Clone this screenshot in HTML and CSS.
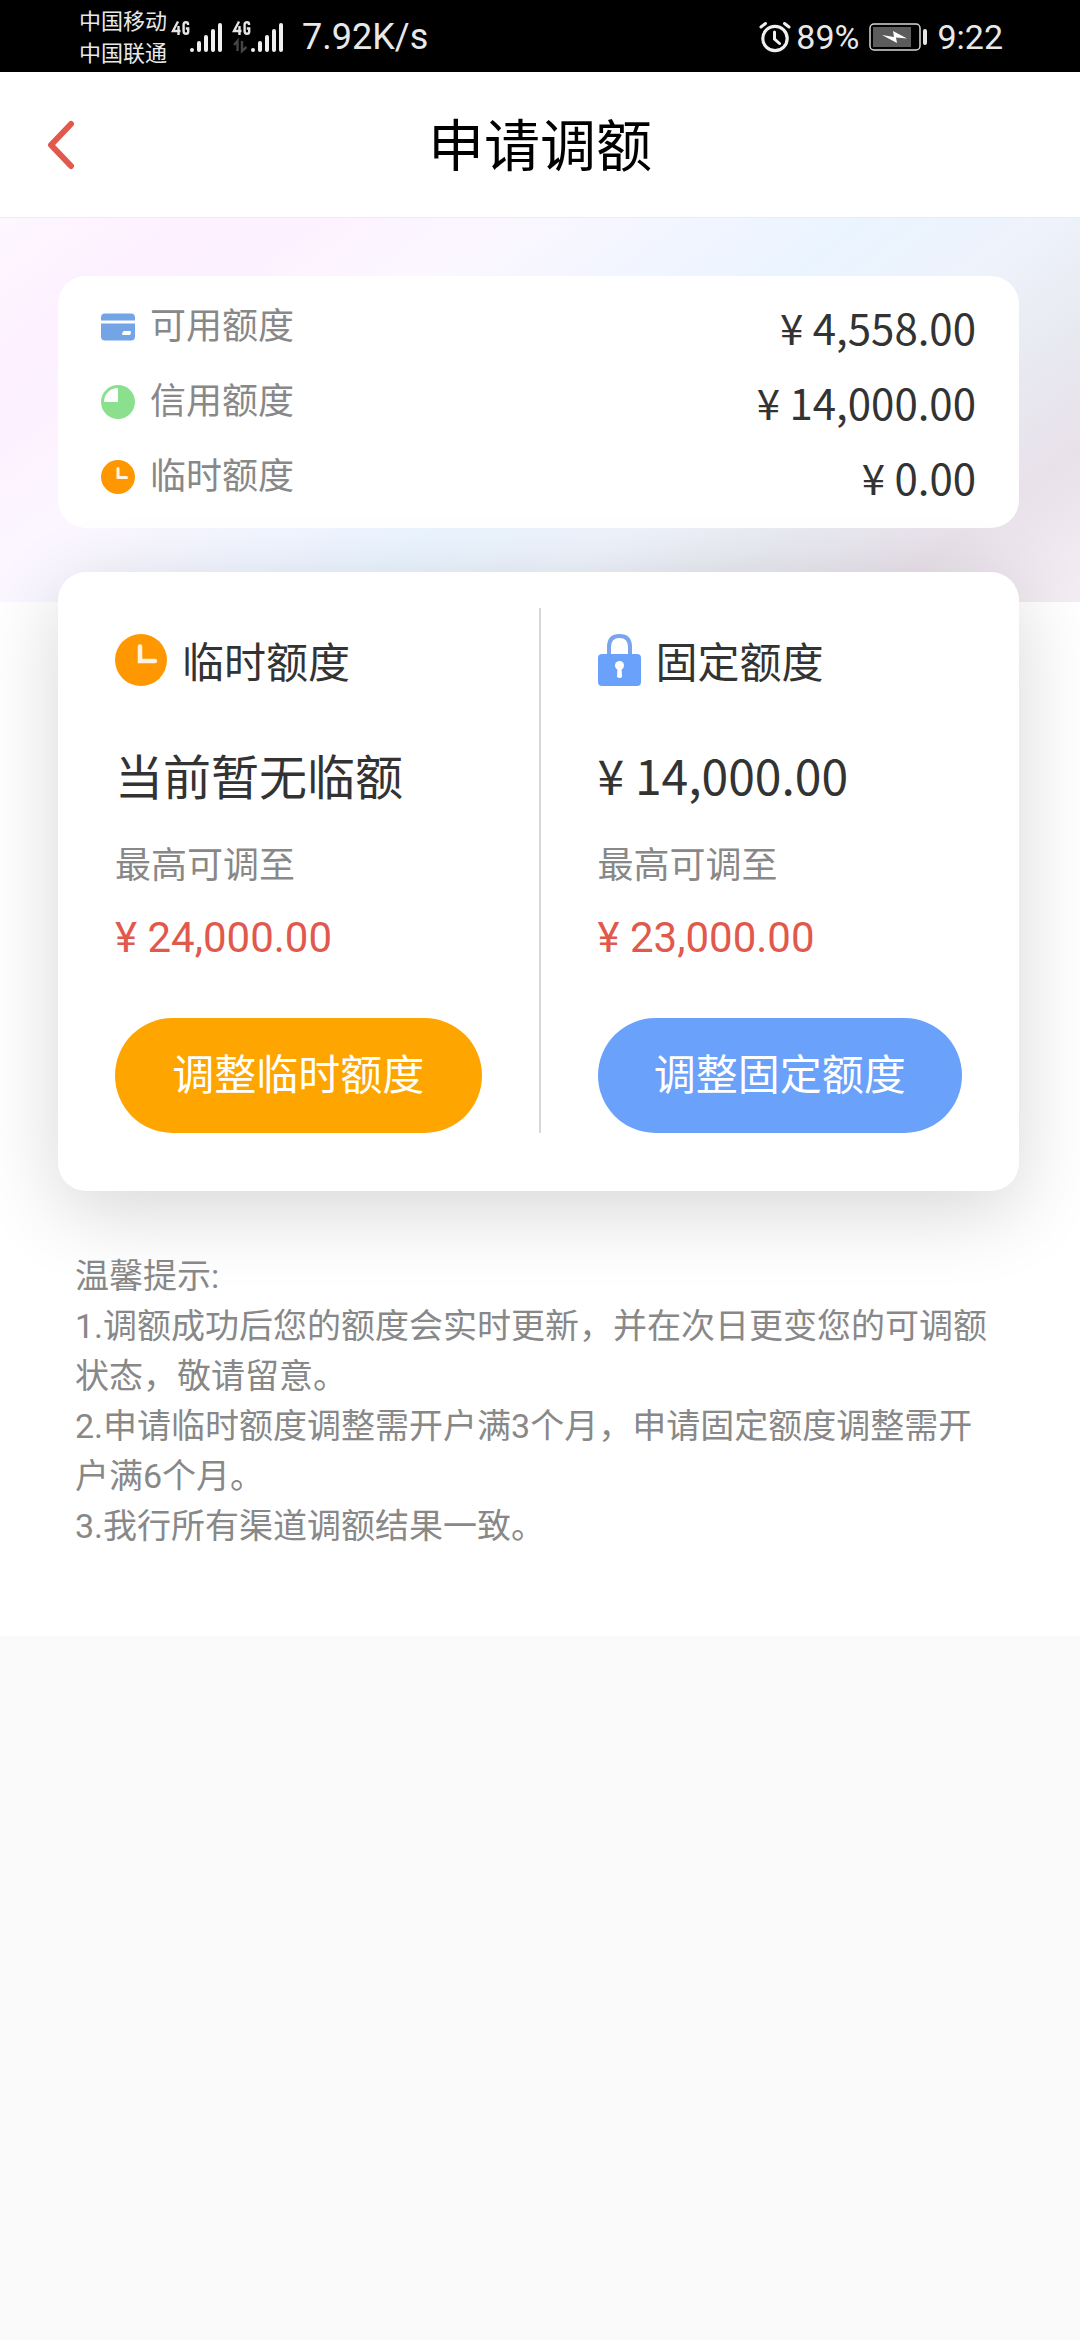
FILE: index.html
```html
<!DOCTYPE html>
<html lang="zh-CN">
<head>
  <meta charset="utf-8">
  <meta name="viewport" content="width=device-width, initial-scale=1">
  <title>申请调额</title>
  <link rel="stylesheet" href="styles.css">
</head>
<body>
  <div class="status">
    <div class="status-side">
      <div class="carriers"><span>中国移动</span><span>中国联通</span></div>
      <svg class="signal" width="52" height="36" viewBox="0 0 52 36" aria-hidden="true">
        <g fill="none" stroke="#e6e6e6" stroke-width="2.4"><path d="M7 2.500L2 12H9.500M7.500 7V16"/><path d="M17 6V5Q17 3.200 15 3.200Q12.600 3.200 12.600 5.500V12Q12.600 14.800 15 14.800Q17.200 14.800 17.200 12.500V9.500H14.800"/></g>
        <g stroke="#f0f0f0" stroke-width="4" stroke-linecap="round"><path d="M21 31V31M28 24V31M35 18V31M42 12V31M49 6V31"/></g>
      </svg>
      <svg class="signal signal-two" width="52" height="36" viewBox="0 0 52 36" aria-hidden="true">
        <g fill="none" stroke="#e6e6e6" stroke-width="2.4"><path d="M7 2.500L2 12H9.500M7.500 7V16"/><path d="M17 6V5Q17 3.200 15 3.200Q12.600 3.200 12.600 5.500V12Q12.600 14.800 15 14.800Q17.200 14.800 17.200 12.500V9.500H14.800"/></g>
        <path d="M2 26L5.500 22V32M10 22V32L14.500 28" fill="none" stroke="#444" stroke-width="2.400"/>
        <g stroke="#f0f0f0" stroke-width="4" stroke-linecap="round"><path d="M21 31V31M28 24V31M35 18V31M42 12V31M49 6V31"/></g>
      </svg>
      <span class="speed">7.92K/s</span>
    </div>
    <div class="status-side status-right">
      <svg width="32" height="32" viewBox="0 0 32 32" fill="none" stroke="#f0f0f0" aria-hidden="true">
        <circle cx="16" cy="17.500" r="12.200" stroke-width="3.200"/><path d="M15.500 11V18L20.500 22.500M2 6L6.500 2.500M30 6L25.500 2.500" stroke-width="3" stroke-linecap="round"/>
      </svg>
      <span class="charge">89%</span>
      <svg class="battery" width="58" height="28" viewBox="0 0 58 28" aria-hidden="true">
        <rect x="1" y="1" width="50" height="26" rx="4" fill="none" stroke="#d8d8d8" stroke-width="1.500"/>
        <rect x="4" y="4" width="38" height="20" fill="#5c5c5c"/><path d="M13 12L25 14L24 8L38 15.500L27 14.500L28 20Z" fill="#fff"/>
        <rect x="54" y="6" width="4" height="16" rx="2" fill="#e6e6e6"/>
      </svg>
      <span>9:22</span>
    </div>
  </div>

  <header class="topbar">
    <button class="back" type="button" aria-label="返回">
      <svg width="30" height="50" viewBox="0 0 30 50" fill="none" stroke="#e0594c" stroke-width="6" stroke-linecap="round" stroke-linejoin="round"><path d="M25 4L5 25L25 46"/></svg>
    </button>
    <h1 class="title">申请调额</h1>
  </header>

  <main class="page">
    <dl class="summary">
      <div class="summary-row">
        <dt><svg width="34" height="34" viewBox="0 0 34 34" aria-hidden="true"><path d="M4 3.500H30Q34 3.500 34 7.500V10.500H0V7.500Q0 3.500 4 3.500ZM0 13.500H34V26.500Q34 30.500 30 30.500H4Q0 30.500 0 26.500Z" fill="#73a4e6"/><path d="M23 22H29L28.500 24H22Z" fill="#fff" stroke="#fff" stroke-width="2" stroke-linejoin="round"/></svg>可用额度</dt>
        <dd>¥ 4,558.00</dd>
      </div>
      <div class="summary-row">
        <dt><svg width="34" height="34" viewBox="0 0 34 34" aria-hidden="true"><circle cx="17" cy="17" r="17" fill="#8ae08c"/><path d="M17 3V17H3Q3 11 7.100 7.100Q11 3 17 3Z" fill="#fff"/></svg>信用额度</dt>
        <dd>¥ 14,000.00</dd>
      </div>
      <div class="summary-row">
        <dt><svg width="34" height="34" viewBox="0 0 34 34" aria-hidden="true"><circle cx="17" cy="17" r="17" fill="#ff9800"/><path d="M17 8.500V17.500H25.500" fill="none" stroke="#fff3df" stroke-width="3" stroke-linecap="round"/></svg>临时额度</dt>
        <dd>¥ 0.00</dd>
      </div>
    </dl>

    <section class="limits">
      <article class="limit">
        <h2 class="limit-name"><svg width="52" height="52" viewBox="0 0 52 52" aria-hidden="true"><circle cx="26" cy="26" r="26" fill="#ff9800"/><path d="M25 12.500V27H40" fill="none" stroke="#fff3df" stroke-width="4.500" stroke-linecap="round"/></svg>临时额度</h2>
        <p class="current">当前暂无临额</p>
        <p class="hint">最高可调至</p>
        <p class="max">¥ 24,000.00</p>
        <button class="adjust adjust-temp" type="button">调整临时额度</button>
      </article>
      <article class="limit">
        <h2 class="limit-name"><svg width="43" height="52" viewBox="0 0 43 52" aria-hidden="true"><path d="M11 21V13Q11 2 21.500 2Q32 2 32 13V21" fill="none" stroke="#7ba4ec" stroke-width="4"/><rect y="20" width="43" height="32" rx="4" fill="#6aa1fa"/><circle cx="21.500" cy="31.500" r="4.500" fill="#fff"/><path d="M19.500 33H23.500L24 43Q21.500 45 19 43Z" fill="#fff"/></svg>固定额度</h2>
        <p class="current">¥ 14,000.00</p>
        <p class="hint">最高可调至</p>
        <p class="max">¥ 23,000.00</p>
        <button class="adjust adjust-fixed" type="button">调整固定额度</button>
      </article>
    </section>

    <section class="notes">
      <p>温馨提示:</p>
      <p>1.调额成功后您的额度会实时更新，并在次日更变您的可调额状态，敬请留意。</p>
      <p>2.申请临时额度调整需开户满3个月，申请固定额度调整需开户满6个月。</p>
      <p>3.我行所有渠道调额结果一致。</p>
    </section>
  </main>
</body>
</html>
```
FILE: styles.css
```css
* {
  box-sizing: border-box;
}

body,
h1,
h2,
p,
dl,
dd {
  margin: 0;
  font-weight: 400;
}

body {
  min-height: 100vh;
  background: #fafafa;
  color: #333;
  font-family: Roboto, "Noto Sans CJK SC", sans-serif;
}

button {
  border: 0;
  padding: 0;
  font: inherit;
  cursor: pointer;
}

svg {
  display: block;
  flex: none;
}

/* Phone status bar */
.status {
  display: flex;
  justify-content: space-between;
  height: 72px;
  padding: 2px 77px 0 79px;
  background: #000;
  color: #e8e8e8;
  font-size: 36px;
}

.status-side {
  display: flex;
  align-items: center;
}

.status-right {
  font-size: 34px;
}

.carriers {
  display: grid;
  padding-top: 2px;
  font-size: 22px;
  line-height: 32px;
}

.signal {
  margin-left: 4px;
}

.signal-two {
  margin-left: 9px;
}

.speed {
  margin-left: 18px;
}

.charge {
  margin-left: 5px;
}

.battery {
  margin: 0 10px;
}

/* Title bar */
.topbar {
  display: grid;
  grid-template-columns: 120px 1fr 120px;
  align-items: center;
  height: 145px;
  background: #fff;
}

.back {
  display: flex;
  align-items: center;
  height: 100%;
  padding-left: 46px;
  background: none;
}

.title {
  padding-top: 4px;
  color: #000;
  font-size: 56px;
  line-height: 80px;
  text-align: center;
}

/* Page with the tinted banner behind its top */
.page {
  padding: 58px 61px 85px 58px;
  border-top: 1px solid #ebebf0;
  background:
    linear-gradient(144deg, #fdf7ff, #fdf0ff 14%, #fbf7ff 32%, #eaf4ff 54%, #eef2fb 66%, #e8e9f0 77%, #e9e1ea 87%, #f4eef4) 0 0 / 100% 384px no-repeat,
    #fff;
}

.summary {
  padding: 13px 43px 14px;
  border-radius: 28px;
  background: #fff;
}

.summary-row {
  display: flex;
  align-items: center;
  justify-content: space-between;
  height: 75px;
}

.summary dt {
  display: flex;
  align-items: center;
  gap: 15px;
  color: #888;
  font-size: 36px;
  line-height: 50px;
}

.summary dd {
  font-family: "Noto Sans CJK SC", sans-serif;
  font-size: 42px;
}

.limits {
  display: grid;
  grid-template-columns: 1fr 1fr;
  margin-top: 44px;
  padding: 36px 0 58px;
  border-radius: 28px;
  background: #fff;
  box-shadow: 0 20px 80px rgba(0, 0, 0, 0.16);
}

.limit {
  display: grid;
  padding: 26px 57px 0;
}

.limit + .limit {
  border-left: 2px solid #d8d8d8;
}

.limit-name {
  display: flex;
  align-items: center;
  gap: 15px;
  font-family: "Noto Sans CJK SC", sans-serif;
  font-size: 42px;
  line-height: 52px;
}

.current {
  margin-top: 58px;
  font-family: "Noto Sans CJK SC", sans-serif;
  font-size: 48px;
  line-height: 60px;
}

.hint {
  margin-top: 37px;
  color: #888;
  font-size: 36px;
  line-height: 50px;
}

.max {
  margin-top: 22px;
  color: #e0594c;
  font-size: 42px;
  line-height: 50px;
}

.adjust {
  height: 115px;
  margin-top: 55px;
  border-radius: 58px;
  color: #fff;
  font-size: 42px;
  line-height: 50px;
}

.adjust-temp {
  background: #ffa500;
}

.adjust-fixed {
  background: #6aa1fa;
}

.notes {
  margin-top: 60px;
  padding: 0 15px 0 17px;
  color: #888;
  font-size: 34px;
  line-height: 50px;
}
```
